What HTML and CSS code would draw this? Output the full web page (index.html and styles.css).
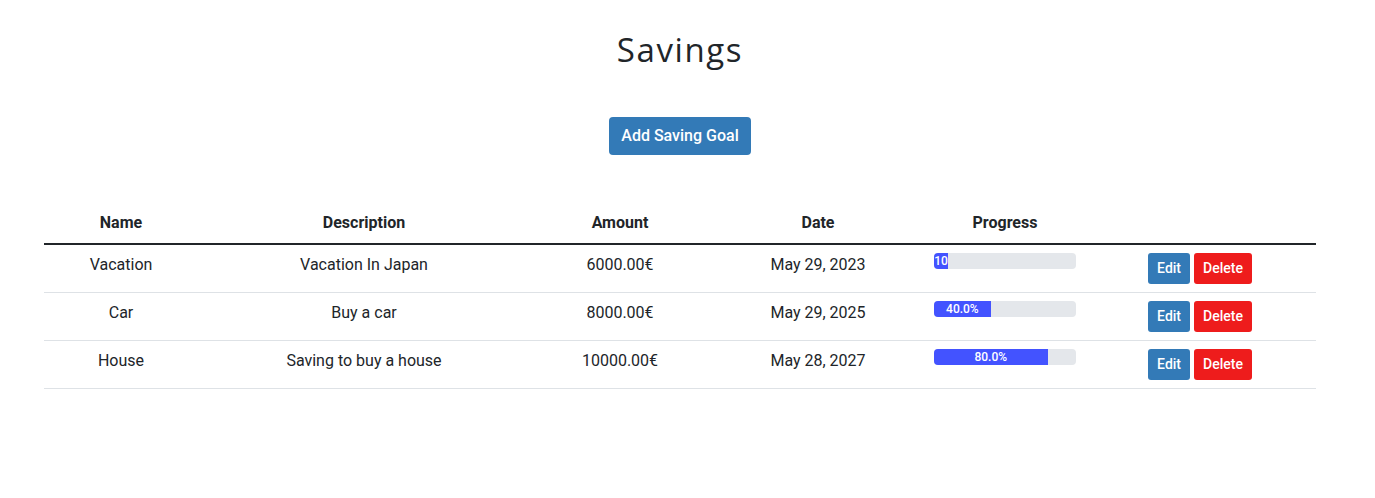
FILE: index.html
```html
<!DOCTYPE html>
<html>
<head>
<meta charset="utf-8">
<link rel="stylesheet" href="styles.css">
</head>
<body>
<div class="page">
  <h1 class="title">Savings</h1>
  <div class="actions-top">
    <button class="btn btn-primary">Add Saving Goal</button>
  </div>
  <table class="table">
    <thead>
      <tr>
        <th class="c-name">Name</th>
        <th class="c-desc">Description</th>
        <th class="c-amount">Amount</th>
        <th class="c-date">Date</th>
        <th class="c-progress">Progress</th>
        <th class="c-actions"></th>
      </tr>
    </thead>
    <tbody>
      <tr>
        <td>Vacation</td>
        <td>Vacation In Japan</td>
        <td>6000.00€</td>
        <td>May 29, 2023</td>
        <td><div class="progress"><div class="progress-bar" style="width: 10%">10</div></div></td>
        <td><div class="row-btns"><button class="btn-sm btn-primary">Edit</button><button class="btn-sm btn-danger">Delete</button></div></td>
      </tr>
      <tr>
        <td>Car</td>
        <td>Buy a car</td>
        <td>8000.00€</td>
        <td>May 29, 2025</td>
        <td><div class="progress"><div class="progress-bar" style="width: 40%">40.0%</div></div></td>
        <td><div class="row-btns"><button class="btn-sm btn-primary">Edit</button><button class="btn-sm btn-danger">Delete</button></div></td>
      </tr>
      <tr>
        <td>House</td>
        <td>Saving to buy a house</td>
        <td>10000.00€</td>
        <td>May 28, 2027</td>
        <td><div class="progress"><div class="progress-bar" style="width: 80%">80.0%</div></div></td>
        <td><div class="row-btns"><button class="btn-sm btn-primary">Edit</button><button class="btn-sm btn-danger">Delete</button></div></td>
      </tr>
    </tbody>
  </table>
</div>
</body>
</html>
```
FILE: styles.css
```css
html, body {
  margin: 0;
  padding: 0;
  background: #fff;
}
body {
  font-family: Roboto, "Liberation Sans", sans-serif;
  color: #212529;
  font-size: 16px;
}
.page {
  padding: 0 59px 0 44px;
}
.title {
  margin: 0;
  padding-top: 28px;
  height: 44px;
  line-height: 44px;
  text-align: center;
  font-family: "Open Sans", "Noto Sans", sans-serif;
  font-weight: 500;
  font-size: 33px;
  letter-spacing: 1.6px;
  color: #212529;
}
.actions-top {
  display: flex;
  justify-content: center;
  margin-top: 45px;
}
.btn {
  font-family: Roboto, sans-serif;
  font-size: 16px;
  line-height: 24px;
  padding: 7px 12px;
  border: 0;
  border-radius: 4px;
  color: #fff;
  font-weight: 500;
}
.btn-primary {
  background: #337ab7;
  color: #fff;
}
.btn-danger {
  background: #ee1c1c;
  color: #fff;
}
.table {
  width: 100%;
  border-collapse: collapse;
  margin-top: 48px;
  table-layout: fixed;
}
.table th {
  font-weight: 700;
  font-size: 16px;
  line-height: 24px;
  padding: 8px 0;
  vertical-align: bottom;
  text-align: center;
  border-bottom: 2px solid #212529;
}
.c-name { width: 154px; }
.c-desc { width: 332px; }
.c-amount { width: 180px; }
.c-date { width: 216px; }
.c-progress { width: 158px; }
.table td {
  height: 31px;
  padding: 8px;
  line-height: 24px;
  text-align: center;
  vertical-align: top;
  border-bottom: 1px solid #dee2e6;
  font-size: 16px;
}
.progress {
  display: flex;
  height: 16px;
  background: #e4e7eb;
  border-radius: 4px;
  overflow: hidden;
}
.progress-bar {
  background: #4353ff;
  color: #fff;
  font-size: 12px;
  line-height: 16px;
  font-weight: 500;
  text-align: center;
  white-space: nowrap;
  overflow: hidden;
}
.row-btns {
  display: flex;
  justify-content: center;
  gap: 4px;
}
.btn-sm {
  font-family: Roboto, sans-serif;
  font-size: 14px;
  font-weight: 500;
  line-height: 21px;
  padding: 5px 9px;
  border: 0;
  border-radius: 3px;
}
```
